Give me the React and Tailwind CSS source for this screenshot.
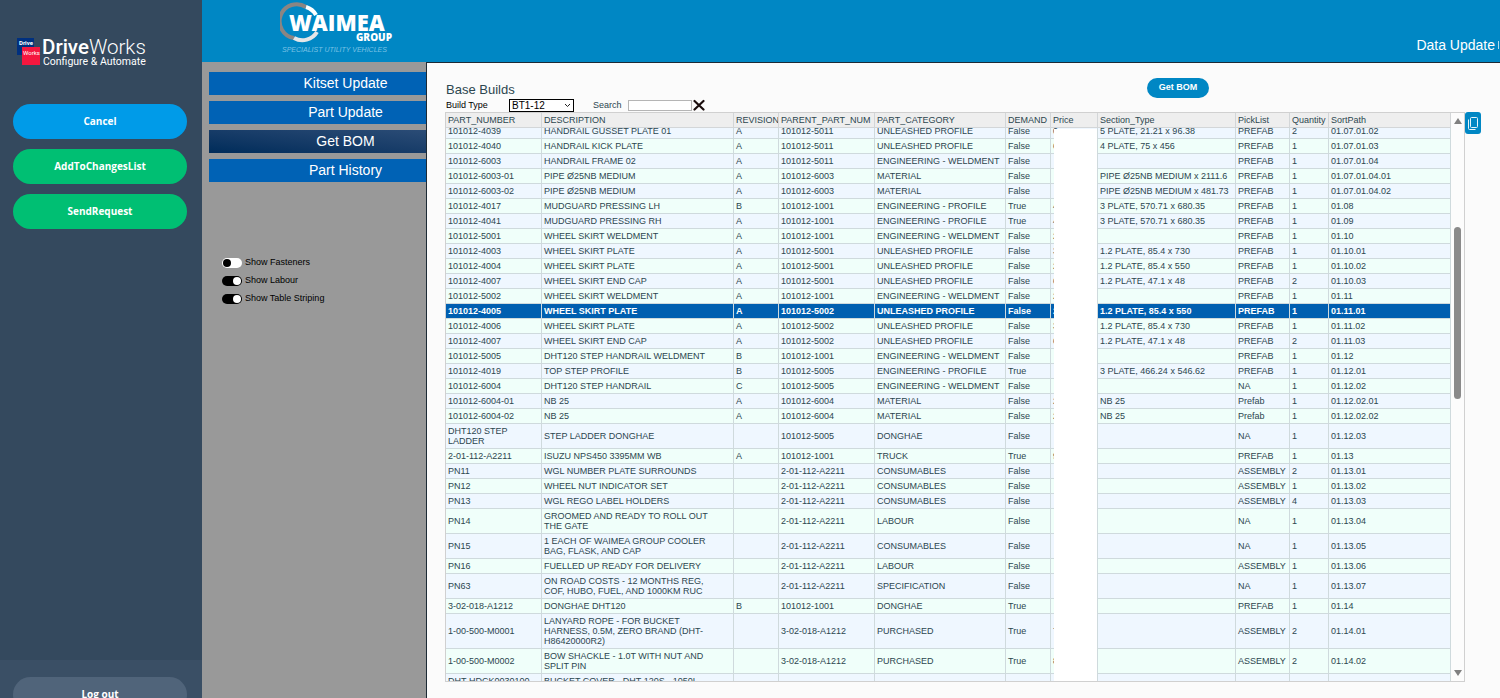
import React, { useEffect, useRef, useState } from "react";

const COLUMNS = [
  { key: "part", label: "PART_NUMBER", width: "w-[96px]" },
  { key: "desc", label: "DESCRIPTION", width: "w-[192px]" },
  { key: "rev", label: "REVISION", width: "w-[45px]" },
  { key: "parent", label: "PARENT_PART_NUM", width: "w-[96px]" },
  { key: "cat", label: "PART_CATEGORY", width: "w-[131px]" },
  { key: "demand", label: "DEMAND", width: "w-[45px]" },
  { key: "price", label: "Price", width: "w-[47px]" },
  { key: "section", label: "Section_Type", width: "w-[138px]" },
  { key: "pick", label: "PickList", width: "w-[54px]" },
  { key: "qty", label: "Quantity", width: "w-[39px]" },
  { key: "sort", label: "SortPath", width: "" },
];

const WELD = "ENGINEERING - WELDMENT";
const PROFILE = "ENGINEERING - PROFILE";
const UNL = "UNLEASHED PROFILE";

// same order as COLUMNS
const ROWS = [
  ["101012-4039", "HANDRAIL GUSSET PLATE 01", "A", "101012-5011", UNL, "False", "0", "5 PLATE, 21.21 x 96.38", "PREFAB", "2", "01.07.01.02"],
  ["101012-4040", "HANDRAIL KICK PLATE", "A", "101012-5011", UNL, "False", "6", "4 PLATE, 75 x 456", "PREFAB", "1", "01.07.01.03"],
  ["101012-6003", "HANDRAIL FRAME 02", "A", "101012-5011", WELD, "False", "", "", "PREFAB", "1", "01.07.01.04"],
  ["101012-6003-01", "PIPE Ø25NB MEDIUM", "A", "101012-6003", "MATERIAL", "False", "", "PIPE Ø25NB MEDIUM x 2111.6", "PREFAB", "1", "01.07.01.04.01"],
  ["101012-6003-02", "PIPE Ø25NB MEDIUM", "A", "101012-6003", "MATERIAL", "False", "", "PIPE Ø25NB MEDIUM x 481.73", "PREFAB", "1", "01.07.01.04.02"],
  ["101012-4017", "MUDGUARD PRESSING LH", "B", "101012-1001", PROFILE, "True", "4", "3 PLATE, 570.71 x 680.35", "PREFAB", "1", "01.08"],
  ["101012-4041", "MUDGUARD PRESSING RH", "A", "101012-1001", PROFILE, "True", "4", "3 PLATE, 570.71 x 680.35", "PREFAB", "1", "01.09"],
  ["101012-5001", "WHEEL SKIRT WELDMENT", "A", "101012-1001", WELD, "False", "2", "", "PREFAB", "1", "01.10"],
  ["101012-4003", "WHEEL SKIRT PLATE", "A", "101012-5001", UNL, "False", "3", "1.2 PLATE, 85.4 x 730", "PREFAB", "1", "01.10.01"],
  ["101012-4004", "WHEEL SKIRT PLATE", "A", "101012-5001", UNL, "False", "2", "1.2 PLATE, 85.4 x 550", "PREFAB", "1", "01.10.02"],
  ["101012-4007", "WHEEL SKIRT END CAP", "A", "101012-5001", UNL, "False", "6", "1.2 PLATE, 47.1 x 48", "PREFAB", "2", "01.10.03"],
  ["101012-5002", "WHEEL SKIRT WELDMENT", "A", "101012-1001", WELD, "False", "2", "", "PREFAB", "1", "01.11"],
  ["101012-4005", "WHEEL SKIRT PLATE", "A", "101012-5002", UNL, "False", "2", "1.2 PLATE, 85.4 x 550", "PREFAB", "1", "01.11.01"],
  ["101012-4006", "WHEEL SKIRT PLATE", "A", "101012-5002", UNL, "False", "3", "1.2 PLATE, 85.4 x 730", "PREFAB", "1", "01.11.02"],
  ["101012-4007", "WHEEL SKIRT END CAP", "A", "101012-5002", UNL, "False", "6", "1.2 PLATE, 47.1 x 48", "PREFAB", "2", "01.11.03"],
  ["101012-5005", "DHT120 STEP HANDRAIL WELDMENT", "B", "101012-1001", WELD, "False", "", "", "PREFAB", "1", "01.12"],
  ["101012-4019", "TOP STEP PROFILE", "B", "101012-5005", PROFILE, "True", "", "3 PLATE, 466.24 x 546.62", "PREFAB", "1", "01.12.01"],
  ["101012-6004", "DHT120 STEP HANDRAIL", "C", "101012-5005", WELD, "False", "", "", "NA", "1", "01.12.02"],
  ["101012-6004-01", "NB 25", "A", "101012-6004", "MATERIAL", "False", "2", "NB 25", "Prefab", "1", "01.12.02.01"],
  ["101012-6004-02", "NB 25", "A", "101012-6004", "MATERIAL", "False", "2", "NB 25", "Prefab", "1", "01.12.02.02"],
  ["DHT120 STEP\nLADDER", "STEP LADDER DONGHAE", "", "101012-5005", "DONGHAE", "False", "", "", "NA", "1", "01.12.03"],
  ["2-01-112-A2211", "ISUZU NPS450 3395MM WB", "A", "101012-1001", "TRUCK", "True", "9", "", "PREFAB", "1", "01.13"],
  ["PN11", "WGL NUMBER PLATE SURROUNDS", "", "2-01-112-A2211", "CONSUMABLES", "False", "", "", "ASSEMBLY", "2", "01.13.01"],
  ["PN12", "WHEEL NUT INDICATOR SET", "", "2-01-112-A2211", "CONSUMABLES", "False", "", "", "ASSEMBLY", "1", "01.13.02"],
  ["PN13", "WGL REGO LABEL HOLDERS", "", "2-01-112-A2211", "CONSUMABLES", "False", "", "", "ASSEMBLY", "4", "01.13.03"],
  ["PN14", "GROOMED AND READY TO ROLL OUT\nTHE GATE", "", "2-01-112-A2211", "LABOUR", "False", "", "", "NA", "1", "01.13.04"],
  ["PN15", "1 EACH OF WAIMEA GROUP COOLER\nBAG, FLASK, AND CAP", "", "2-01-112-A2211", "CONSUMABLES", "False", "", "", "NA", "1", "01.13.05"],
  ["PN16", "FUELLED UP READY FOR DELIVERY", "", "2-01-112-A2211", "LABOUR", "False", "", "", "ASSEMBLY", "1", "01.13.06"],
  ["PN63", "ON ROAD COSTS - 12 MONTHS REG,\nCOF, HUBO, FUEL, AND 1000KM RUC", "", "2-01-112-A2211", "SPECIFICATION", "False", "", "", "NA", "1", "01.13.07"],
  ["3-02-018-A1212", "DONGHAE DHT120", "B", "101012-1001", "DONGHAE", "True", "", "", "PREFAB", "1", "01.14"],
  ["1-00-500-M0001", "LANYARD ROPE - FOR BUCKET\nHARNESS, 0.5M, ZERO BRAND (DHT-\nH86420000R2)", "", "3-02-018-A1212", "PURCHASED", "True", "7", "", "ASSEMBLY", "2", "01.14.01"],
  ["1-00-500-M0002", "BOW SHACKLE - 1.0T WITH NUT AND\nSPLIT PIN", "", "3-02-018-A1212", "PURCHASED", "True", "8", "", "ASSEMBLY", "2", "01.14.02"],
  ["DHT-HDCK0030100", "BUCKET COVER - DHT 120S - 1050L", "", "", "", "", "", "", "", "", ""],
];

const NAV = ["Kitset Update", "Part Update", "Get BOM", "Part History"];

function DriveWorksLogo() {
  return (
    <svg width="140" height="36" viewBox="0 0 140 36" role="img" aria-label="DriveWorks Configure & Automate">
      <rect x="1" y="3" width="17" height="17" fill="#00307f" />
      <rect x="6" y="12" width="18" height="18" fill="#f5173f" />
      <text x="3" y="10" fill="#fff" fontFamily="Roboto, sans-serif" fontSize="6" fontWeight="700">Drive</text>
      <text x="7" y="20" fill="#fff" fontFamily="Roboto, sans-serif" fontSize="6" fontWeight="400">Works</text>
      <text x="26" y="19" fill="#fff" fontFamily="Roboto, sans-serif" fontSize="20.500" fontWeight="500">
        Drive<tspan fontWeight="300">Works</tspan>
      </text>
      <text x="27" y="30" fill="#fff" fontFamily="Roboto, sans-serif" fontSize="10.500" fontWeight="400">Configure &amp; Automate</text>
    </svg>
  );
}

function WaimeaLogo() {
  return (
    <svg width="116" height="56" viewBox="0 0 116 56" role="img" aria-label="Waimea Group">
      <g fill="none" strokeWidth="4">
        <path d="M14 38A17 17 0 1 1 26 7" stroke="#8b8583" />
        <path d="M26 7A17 17 0 0 1 36 15" stroke="#fff" />
        <path d="M14 38A17 17 0 0 0 37 32" stroke="#e4e6e8" />
      </g>
      <text x="9" y="31" fill="#fff" fontFamily="Open Sans, sans-serif" fontSize="22" fontWeight="800">
        WAIMEA
      </text>
      <text x="112" y="41" textAnchor="end" fill="#fff" fontFamily="Open Sans, sans-serif" fontSize="10" fontWeight="800">GROUP</text>
      <text x="2" y="52" fill="#7cc3e4" fontFamily="Liberation Sans, sans-serif" fontSize="7" fontStyle="italic">
        SPECIALIST UTILITY VEHICLES
      </text>
    </svg>
  );
}

function Toggle({ label, checked, onChange }) {
  return (
    <label className="flex items-center gap-[3px] h-[18px] cursor-pointer">
      <input
        type="checkbox"
        role="switch"
        className="peer sr-only"
        checked={checked}
        onChange={() => onChange(!checked)}
      />
      <span
        className={`flex items-center w-5 h-[10px] px-px rounded-full ${
          checked ? "bg-black justify-end" : "bg-white justify-start"
        }`}
      >
        <span className={`w-2 h-2 rounded-full ${checked ? "bg-white" : "bg-black"}`} />
      </span>
      <span>{label}</span>
    </label>
  );
}

function Scrollbar() {
  return (
    <div className="flex flex-col items-center w-[13px] shrink-0 py-1 bg-[#fcfcfc]">
      <svg width="8" height="8" viewBox="0 0 8 8" fill="#808080">
        <path d="M4 1L8 7H0z" />
      </svg>
      <div className="flex-[102]" />
      <div className="flex-[172] w-[7px] rounded-full bg-[#8a8a8a]" />
      <div className="flex-[271]" />
      <svg width="8" height="8" viewBox="0 0 8 8" fill="#808080">
        <path d="M0 1H8L4 7z" />
      </svg>
    </div>
  );
}

function BomTable({ striping }) {
  const scroller = useRef(null);
  const [selected, setSelected] = useState(12);

  useEffect(() => {
    scroller.current.scrollTop = 4;
  }, []);

  const rowColor = (i) => {
    if (i === selected) return "bg-[#005fb0] text-white font-bold";
    if (!striping) return "bg-white";
    return i % 2 ? "bg-[#f0fffa]" : "bg-[#eff7ff]";
  };

  return (
    <div className="flex flex-1 min-w-0 -ml-px border border-[#d0d0d0]">
      <div ref={scroller} className="relative flex-1 min-w-0 h-full overflow-auto [scrollbar-width:none]">
        <div className="relative">
          <table className="w-full table-fixed border-separate border-spacing-0 text-left text-[9px] leading-[10px] text-[#2c464f]">
            <thead className="sticky top-0 z-20">
              <tr>
                {COLUMNS.map((col) => (
                  <th
                    key={col.key}
                    className={`${col.width} h-[15px] px-0.5 font-normal whitespace-nowrap overflow-hidden bg-[#eeeeee] border-r border-b border-[#d3d6d8]`}
                  >
                    {col.label}
                  </th>
                ))}
              </tr>
            </thead>
            <tbody>
              {ROWS.map((row, i) => (
                <tr key={i} className={rowColor(i)} onClick={() => setSelected(i)}>
                  {row.map((cell, c) => (
                    <td
                      key={COLUMNS[c].key}
                      className="px-0.5 py-0.5 h-[15px] whitespace-pre border-r border-b border-[#cfdadd]"
                    >
                      {cell}
                    </td>
                  ))}
                </tr>
              ))}
            </tbody>
          </table>
          {/* prices are blanked out */}
          <div className="absolute z-10 top-[20px] bottom-0 left-[608px] w-[43px] bg-white" />
        </div>
      </div>
      <Scrollbar />
    </div>
  );
}

export default function App() {
  const [active, setActive] = useState("Get BOM");
  const [search, setSearch] = useState("");
  const [buildType, setBuildType] = useState("BT1-12");
  const [fasteners, setFasteners] = useState(false);
  const [labour, setLabour] = useState(true);
  const [striping, setStriping] = useState(true);

  return (
    <div className="flex h-screen overflow-hidden font-['Liberation_Sans',Arial,sans-serif]">
      {/* sidebar */}
      <aside className="flex flex-col w-[202px] shrink-0 bg-[#34495e] font-['Open_Sans',sans-serif] text-[10px] font-bold text-white">
        <div className="pt-[35px] pl-4">
          <DriveWorksLogo />
        </div>
        <div className="flex flex-col gap-[10px] pl-[13px] pr-[15px] pt-[33px]">
          <button className="h-[35px] rounded-full bg-[#009be8]">Cancel</button>
          <button className="h-[35px] rounded-full bg-[#00bf73]">AddToChangesList</button>
          <button className="h-[35px] rounded-full bg-[#00bf73]">SendRequest</button>
        </div>
        <div className="mt-auto h-[38px] shrink-0 pl-[13px] pr-[15px] pt-[17px] bg-[#3a4f65]">
          <button className="w-full h-[35px] rounded-full bg-[#50647a]">Log out</button>
        </div>
      </aside>

      <div className="flex flex-col flex-1 min-w-0">
        <header className="flex justify-between h-[62px] shrink-0 bg-[#0087c4] text-white">
          <div className="pl-[78px]">
            <WaimeaLogo />
          </div>
          <div className="flex items-center gap-[3px] h-5 mt-[35px] text-sm whitespace-nowrap">
            Data Update
            <span className="w-px h-2 mr-px bg-white/70" />
          </div>
        </header>

        <div className="flex flex-1 min-h-0">
          <div className="w-[224px] shrink-0 bg-[#999999]">
            <nav className="flex flex-col gap-[6px] pl-[7px] pt-[10px]">
              {NAV.map((item) => (
                <button
                  key={item}
                  onClick={() => setActive(item)}
                  className={`h-[23px] pl-[56px] pb-0.5 text-sm text-white ${
                    item === active
                      ? "bg-linear-to-tr from-[#002c5a] to-[#2b4c76]"
                      : "bg-[#0062b5]"
                  }`}
                >
                  {item}
                </button>
              ))}
            </nav>
            <div className="flex flex-col pl-5 pt-[72px] text-[9px] text-black">
              <Toggle label="Show Fasteners" checked={fasteners} onChange={setFasteners} />
              <Toggle label="Show Labour" checked={labour} onChange={setLabour} />
              <Toggle label="Show Table Striping" checked={striping} onChange={setStriping} />
            </div>
          </div>

          <main className="flex flex-col flex-1 min-w-0 pl-[19px] pr-[19px] pt-[15px] pb-4 border-l border-t border-[#1c2a35] bg-[#fbfbfb]">
            <div className="flex items-end justify-between h-5 shrink-0">
              <h1 className="text-[13px] leading-4 text-[#2c464f]">Base Builds</h1>
              <button className="h-5 w-[62px] mr-[272px] rounded-full bg-[#0087c4] text-[9px] font-bold text-white">
                Get BOM
              </button>
            </div>
            <div className="flex items-center h-[14px] shrink-0 text-[9px] leading-[12px]">
              <label htmlFor="build-type" className="w-[63px] text-black">Build Type</label>
              <div className="relative w-[65px] h-[13px]">
                <select
                  id="build-type"
                  value={buildType}
                  onChange={(e) => setBuildType(e.target.value)}
                  className="block appearance-none w-full h-full pl-0.5 border border-black bg-white text-[10px] leading-[11px] text-black"
                >
                  <option>BT1-12</option>
                  <option>BT1-14</option>
                </select>
                <svg
                  className="absolute right-[3px] top-1 pointer-events-none"
                  width="7" height="5" viewBox="0 0 7 5" fill="none" stroke="#222"
                >
                  <path d="M1 1L3.500 3.500L6 1" />
                </svg>
              </div>
              <label htmlFor="search" className="w-[35px] ml-[19px] text-[#2c464f]">Search</label>
              <input
                id="search"
                value={search}
                onChange={(e) => setSearch(e.target.value)}
                className="w-16 h-[11px] px-0.5 border border-[#b5b5b5] bg-white"
              />
              <button aria-label="Clear search" onClick={() => setSearch("")} className="ml-px">
                <svg width="12" height="12" viewBox="0 0 12 12" stroke="#1a0d0d" strokeWidth="2.200" strokeLinecap="round">
                  <path d="M1.500 2L10.500 10.500M10.500 2L1.500 10.500" />
                </svg>
              </button>
            </div>
            <div className="flex flex-1 min-h-0">
              <BomTable striping={striping} />
              <button
                aria-label="Copy table"
                className="flex items-center justify-center self-start w-4 h-[22px] rounded-[3px] bg-[#0087c4]"
              >
                <svg width="12" height="15" viewBox="0 0 12 15" fill="none" stroke="#e6f4fb">
                  <rect x="3.500" y="1.500" width="7" height="10" rx="1" />
                  <path d="M1.500 3.500V12.500a1 1 0 0 0 1 1H8.500" />
                </svg>
              </button>
            </div>
          </main>
        </div>
      </div>
    </div>
  );
}
